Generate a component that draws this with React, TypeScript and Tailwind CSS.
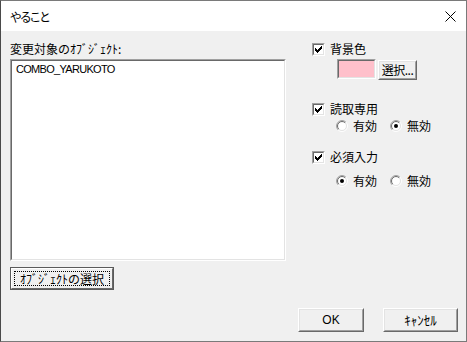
import type { ReactNode } from "react";

const jp = "font-['Noto_Sans_CJK_JP','Noto_Sans_CJK_SC',sans-serif]";

function Sunken({ className, children }: { className: string; children?: ReactNode }) {
  return (
    <div className={`border border-t-[#a0a0a0] border-l-[#a0a0a0] border-b-white border-r-white ${className}`}>
      <div className="h-full w-full border border-t-[#696969] border-l-[#696969] border-b-[#e3e3e3] border-r-[#e3e3e3] bg-white">
        {children}
      </div>
    </div>
  );
}

function CheckBox() {
  const starts = [2, 3, 4, 3, 2, 1, 0];
  return (
    <Sunken className="h-[13px] w-[13px] shrink-0">
      <svg width="9" height="9" viewBox="0 0 9 9" shapeRendering="crispEdges">
        {starts.map((s, i) => (
          <rect key={i} x={1 + i} y={1 + s} width="1" height="3" fill="#000" />
        ))}
      </svg>
    </Sunken>
  );
}

function arc(r: number, first: boolean) {
  const d = r * 0.7071;
  const bl = `${6 - d},${6 + d}`;
  const tr = `${6 + d},${6 - d}`;
  return first ? `M${bl} A${r} ${r} 0 0 1 ${tr}` : `M${tr} A${r} ${r} 0 0 1 ${bl}`;
}

function Radio({ on }: { on: boolean }) {
  return (
    <svg width="12" height="12" viewBox="0 0 12 12" className="shrink-0">
      <circle cx="6" cy="6" r="4.5" fill="#fff" />
      <path d={arc(5.5, true)} stroke="#a0a0a0" fill="none" />
      <path d={arc(5.5, false)} stroke="#fff" fill="none" />
      <path d={arc(4.5, true)} stroke="#696969" fill="none" />
      <path d={arc(4.5, false)} stroke="#e3e3e3" fill="none" />
      {on && <circle cx="6" cy="6" r="2" fill="#000" />}
    </svg>
  );
}

function Button({ className, children }: { className: string; children: ReactNode }) {
  return (
    <div className={`border border-t-white border-l-white border-b-[#696969] border-r-[#696969] ${className}`}>
      <div className="flex h-full w-full items-center justify-center border border-t-[#e3e3e3] border-l-[#e3e3e3] border-b-[#a0a0a0] border-r-[#a0a0a0] bg-[#f0f0f0]">
        {children}
      </div>
    </div>
  );
}

function RadioPair({ first }: { first: boolean }) {
  return (
    <div className="ml-[24px] flex items-center">
      <Radio on={first} />
      <span className="ml-[5px] leading-[14px]">有効</span>
      <div className="ml-[13px]">
        <Radio on={!first} />
      </div>
      <span className="ml-[5px] leading-[14px]">無効</span>
    </div>
  );
}

export default function App() {
  return (
    <div className={`flex h-[342px] w-[467px] flex-col border border-[#7a7a7a] border-l-[#4a4a4a] bg-[#f0f0f0] text-[12px] text-black ${jp}`}>
      <div className="flex h-[30px] shrink-0 items-center justify-between bg-white pl-[9px] pr-[9px]">
        <span className="pt-[2px] leading-[14px] tracking-[-1px] [font-feature-settings:'palt']">やること</span>
        <svg width="11" height="11" viewBox="0 0 11 11" className="mr-[1px] mt-[1px]">
          <path d="M0.5 0.5 L10.5 10.5 M10.5 0.5 L0.5 10.5" stroke="#000" strokeWidth="1" />
        </svg>
      </div>

      <div className="flex flex-1 flex-col">
        <div className="flex pl-[9px]">
          <div className="flex w-[276px] flex-col pt-[11px]">
            <span className="leading-[14px]">変更対象のｵﾌﾞｼﾞｪｸﾄ:</span>
            <Sunken className="mt-[3px] h-[202px] w-[276px]">
              <div className="pl-[4px] pt-[2px] font-['Liberation_Sans',sans-serif] text-[11px] leading-[13px] tracking-[-0.7px]">
                COMBO_YARUKOTO
              </div>
            </Sunken>
            <div className="mt-[6px] h-[23px] w-[104px] border border-[#5a5a5a]">
              <div className="h-full w-full border border-t-white border-l-white border-b-[#696969] border-r-[#696969] bg-[#f0f0f0] p-[2px]">
                <div className="flex h-full w-full items-center justify-center border border-dotted border-black text-[12px] leading-[14px]">
                  ｵﾌﾞｼﾞｪｸﾄの選択
                </div>
              </div>
            </div>
          </div>

          <div className="ml-[26px] flex flex-col pt-[11px]">
            <div className="flex items-center">
              <CheckBox />
              <span className="ml-[5px] leading-[14px]">背景色</span>
            </div>
            <div className="ml-[25px] mt-[3px] flex items-start">
              <Sunken className="h-[20px] w-[39px]">
                <div className="h-full w-full bg-[#ffc0cb]" />
              </Sunken>
              <Button className="ml-[2px] mt-[1px] h-[20px] w-[39px]">
                <span className="whitespace-nowrap leading-[14px] tracking-[-0.5px]">選択...</span>
              </Button>
            </div>

            <div className="mt-[22px] flex items-center">
              <CheckBox />
              <span className="ml-[5px] leading-[14px]">読取専用</span>
            </div>
            <div className="mt-[3px]">
              <RadioPair first={false} />
            </div>

            <div className="mt-[17px] flex items-center">
              <CheckBox />
              <span className="ml-[5px] leading-[14px]">必須入力</span>
            </div>
            <div className="mt-[10px]">
              <RadioPair first={true} />
            </div>
          </div>
        </div>

        <div className="flex-1" />

        <div className="flex justify-end pb-[9px] pr-[8px]">
          <Button className="h-[24px] w-[66px]">
            <span className="font-['Liberation_Sans',sans-serif] text-[12px] leading-[14px]">OK</span>
          </Button>
          <Button className="ml-[19px] h-[24px] w-[75px]">
            <span className="text-[13px] leading-[14px]">ｷｬﾝｾﾙ</span>
          </Button>
        </div>
      </div>
    </div>
  );
}
